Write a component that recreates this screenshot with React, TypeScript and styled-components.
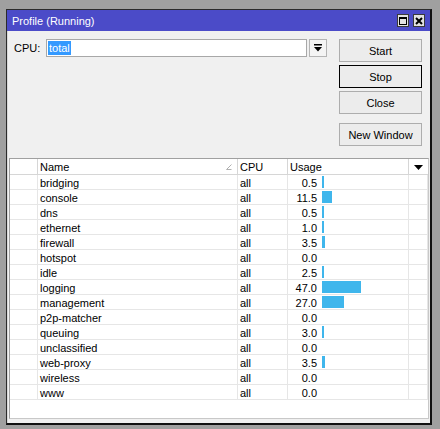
import React from "react";
import styled, { createGlobalStyle } from "styled-components";

const GlobalStyle = createGlobalStyle`
  html, body {
    margin: 0;
    padding: 0;
    background: #a0a0a0;
    font-family: "Liberation Sans", Arial, sans-serif;
    font-size: 11px;
    color: #000;
  }
  * { box-sizing: border-box; }
`;

const Screen = styled.div`
  width: 440px;
  height: 429px;
  padding: 9px 0 0 6px;
  overflow: hidden;
`;

const Window = styled.div`
  width: 426px;
  height: 416px;
  display: flex;
  flex-direction: column;
  border: 1px solid #2b2b2b;
  border-right-width: 2px;
  border-bottom-width: 2px;
  border-right-color: #111;
  border-bottom-color: #111;
  background: #f0f0f0;
`;

const TitleBar = styled.div`
  height: 21px;
  flex: none;
  display: flex;
  align-items: center;
  padding: 0 5px 0 5px;
  background: #4b4bc8;
  color: #fff;
`;

const Title = styled.div`
  flex: 1;
  padding-top: 1px;
`;

const TitleButton = styled.div`
  width: 12px;
  height: 13px;
  margin-left: 4px;
  display: flex;
  align-items: center;
  justify-content: center;
  background: #e2e2e2;
  border: 1px solid #3a3a3a;
`;

const Body = styled.div`
  flex: 1;
  display: flex;
  flex-direction: column;
  padding: 8px 1px 4px 1px;
  border-left: 1px solid #d8d8d8;
`;

const Top = styled.div`
  display: flex;
  align-items: flex-start;
  padding: 0 7px 0 5px;
`;

const CpuRow = styled.div`
  flex: 1;
  display: flex;
  align-items: center;
  height: 18px;
`;

const Label = styled.div`
  width: 32px;
  line-height: 18px;
`;

const Input = styled.div`
  width: 261px;
  height: 18px;
  background: #fff;
  border: 1px solid #a8a8a8;
  display: flex;
  align-items: center;
  padding-left: 1px;
`;

const Selected = styled.span`
  background: #3399ff;
  color: #fff;
  line-height: 14px;
  padding: 0 1px;
`;

const DropButton = styled.div`
  width: 18px;
  height: 18px;
  margin-left: 2px;
  display: flex;
  align-items: center;
  justify-content: center;
  background: #f4f4f4;
  border: 1px solid #b4b4b4;
`;

const ButtonColumn = styled.div`
  width: 83px;
  display: flex;
  flex-direction: column;
  gap: 3px;
`;

const Button = styled.div<{ $focused?: boolean; $spaced?: boolean }>`
  height: 23px;
  display: flex;
  align-items: center;
  justify-content: center;
  background: #ececec;
  border: 1px solid ${(p) => (p.$focused ? "#000" : "#adadad")};
  margin-top: ${(p) => (p.$spaced ? "6px" : "0")};
`;

const Table = styled.div`
  flex: 1;
  margin-top: 12px;
  background: #fff;
  border: 1px solid #a0a0a0;
  border-right-color: #c8c8c8;
  border-bottom-color: #c8c8c8;
`;

const Row = styled.div<{ $header?: boolean }>`
  display: grid;
  grid-template-columns: 28px 200px 50px 121px 1fr;
  height: ${(p) => (p.$header ? "16px" : "15px")};
  border-bottom: 1px solid ${(p) => (p.$header ? "#d6d6d6" : "#e6e6e6")};
`;

const Cell = styled.div<{ $header?: boolean }>`
  display: flex;
  align-items: center;
  padding: 1px 0 0 2px;
  border-right: 1px solid ${(p) => (p.$header ? "#d6d6d6" : "#e6e6e6")};
  white-space: nowrap;
  overflow: hidden;
`;

const HeaderName = styled(Cell)`
  justify-content: space-between;
  padding-right: 5px;
`;

const ArrowCell = styled(Cell)`
  justify-content: center;
  padding-left: 0;
  border-right: none;
`;

const Value = styled.span`
  width: 27px;
  text-align: right;
`;

const Bar = styled.div`
  height: 12px;
  margin-left: 5px;
  margin-top: -1px;
  background: #3fb6ec;
`;

type Entry = [string, string, number];

const rows: Entry[] = [
  ["bridging", "all", 0.5],
  ["console", "all", 11.5],
  ["dns", "all", 0.5],
  ["ethernet", "all", 1.0],
  ["firewall", "all", 3.5],
  ["hotspot", "all", 0.0],
  ["idle", "all", 2.5],
  ["logging", "all", 47.0],
  ["management", "all", 27.0],
  ["p2p-matcher", "all", 0.0],
  ["queuing", "all", 3.0],
  ["unclassified", "all", 0.0],
  ["web-proxy", "all", 3.5],
  ["wireless", "all", 0.0],
  ["www", "all", 0.0],
];

const barWidth = (v: number) => (v > 0 ? Math.max(2, Math.round(v * 0.83)) : 0);

const App: React.FC = () => {
  return (
    <>
      <GlobalStyle />
      <Screen>
        <Window>
          <TitleBar>
            <Title>Profile (Running)</Title>
            <TitleButton>
              <svg width="8" height="8" viewBox="0 0 8 8">
                <rect x="0.5" y="0.5" width="7" height="7" fill="none" stroke="#000" />
                <line x1="0" y1="1" x2="8" y2="1" stroke="#000" strokeWidth="2" />
              </svg>
            </TitleButton>
            <TitleButton>
              <svg width="8" height="8" viewBox="0 0 8 8">
                <path d="M1 1 L7 7 M7 1 L1 7" stroke="#000" strokeWidth="2" />
              </svg>
            </TitleButton>
          </TitleBar>
          <Body>
            <Top>
              <CpuRow>
                <Label>CPU:</Label>
                <Input>
                  <Selected>total</Selected>
                </Input>
                <DropButton>
                  <svg width="8" height="8" viewBox="0 0 8 8">
                    <rect x="0" y="0" width="8" height="1.5" fill="#000" />
                    <path d="M0 3 H8 L4 7.5 Z" fill="#000" />
                  </svg>
                </DropButton>
              </CpuRow>
              <ButtonColumn>
                <Button>Start</Button>
                <Button $focused>Stop</Button>
                <Button>Close</Button>
                <Button $spaced>New Window</Button>
              </ButtonColumn>
            </Top>
            <Table>
              <Row $header>
                <Cell $header />
                <HeaderName $header>
                  <span>Name</span>
                  <svg width="6" height="6" viewBox="0 0 6 6">
                    <path d="M0.5 5.5 L5.5 0.5 M0.5 5.5 H5.5" stroke="#b0b0b0" fill="none" />
                  </svg>
                </HeaderName>
                <Cell $header>CPU</Cell>
                <Cell $header>Usage</Cell>
                <ArrowCell $header>
                  <svg width="9" height="5" viewBox="0 0 9 5">
                    <path d="M0 0 H9 L4.5 5 Z" fill="#000" />
                  </svg>
                </ArrowCell>
              </Row>
              {rows.map(([name, cpu, usage]) => (
                <Row key={name}>
                  <Cell />
                  <Cell>{name}</Cell>
                  <Cell>{cpu}</Cell>
                  <Cell>
                    <Value>{usage.toFixed(1)}</Value>
                    {usage > 0 && <Bar style={{ width: barWidth(usage) }} />}
                  </Cell>
                  <Cell />
                </Row>
              ))}
            </Table>
          </Body>
        </Window>
      </Screen>
    </>
  );
};

export default App;
